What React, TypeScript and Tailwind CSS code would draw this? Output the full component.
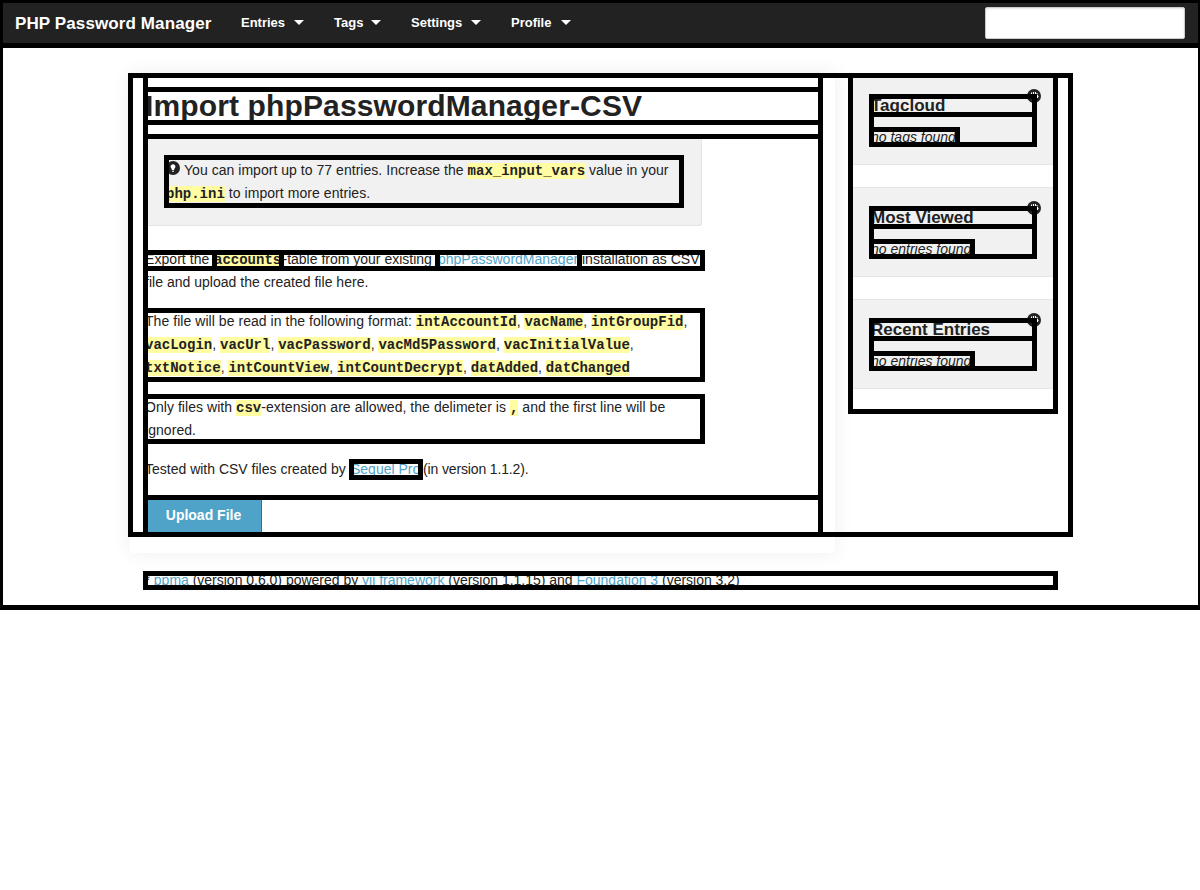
import React from "react";

const frame = "outline-[5px] outline-solid outline-black -outline-offset-5";

function Code({ children }: { children: React.ReactNode }) {
  return (
    <code className="bg-[#fffca2] font-['Liberation_Mono'] text-[14px] font-bold tracking-normal">{children}</code>
  );
}

function CodeList({ items, last = "," }: { items: string[]; last?: string }) {
  return (
    <div className="h-[23px]">
      {items.map((item, i) => (
        <React.Fragment key={item}>
          <Code>{item}</Code>
          {i < items.length - 1 ? ", " : last}
        </React.Fragment>
      ))}
    </div>
  );
}

function NavItem({ label, width }: { label: string; width: string }) {
  return (
    <li className={`flex items-center justify-between ${width}`}>
      <span className="text-[13px] font-bold leading-[20px]">{label}</span>
      <svg className="-mt-px" width="10" height="5" viewBox="0 0 10 5">
        <path d="M0 0h10L5 5z" fill="#fff" />
      </svg>
    </li>
  );
}

function Panel({ title, text, emWidth }: { title: string; text: string; emWidth: string }) {
  return (
    <section className="h-[90px] w-[210px] border border-[#e4e4e4] bg-[#f1f1f1] px-[20px] pt-[18px]">
      <div className={`relative h-[53px] w-[168px] ${frame}`}>
        <svg className="absolute top-[-5px] left-[158px]" width="14" height="14" viewBox="0 0 14 14">
          <circle cx="7" cy="7" r="7" fill="#222" />
          <path
            d="M4.5 3.5v1.5M6.5 3v2M8.5 3v2M10 4v1.5M4 7.5h7.5M10.5 6v3M7 9v2"
            stroke="#fff"
            strokeWidth="1.1"
          />
        </svg>
        <div className={`absolute inset-0 ${frame}`} />
        <h5 className={`relative h-[23px] pl-[2px] text-[17px] font-bold leading-[23px] ${frame}`}>{title}</h5>
        <div
          className={`relative mt-[10px] h-[20px] pl-[2px] leading-[21px] italic whitespace-nowrap ${emWidth} ${frame}`}
        >
          {text}
        </div>
      </div>
    </section>
  );
}

function Link({ children }: { children: React.ReactNode }) {
  return <a className="text-[#4fa3c8]">{children}</a>;
}

export default function App() {
  return (
    <div className="h-[890px] w-[1200px] overflow-hidden bg-white font-['Liberation_Sans',sans-serif] text-[14px] leading-[23px] text-[#222]">
      <div className="h-[610px] border-t-3 border-r-2 border-b-5 border-l-3 border-black">
        <nav className="flex h-[45px] items-center border-b-5 border-black bg-[#222] pr-[13px] pl-[12px] text-white">
          <h1 className="w-[226px] pt-px text-[17px] font-bold leading-[21px] tracking-[0.11px] whitespace-nowrap">
            PHP Password Manager
          </h1>
          <ul className="flex flex-1 gap-[30px]">
            <NavItem label="Entries" width="w-[63px]" />
            <NavItem label="Tags" width="w-[47px]" />
            <NavItem label="Settings" width="w-[70px]" />
            <NavItem label="Profile" width="w-[60px]" />
          </ul>
          <input className="h-[32px] w-[200px] rounded-[2px] border border-[#ccc] bg-white shadow-[inset_0_1px_2px_rgba(0,0,0,0.1)]" />
        </nav>

        <main className="pt-[25px] pl-[125px]">
          <div className={`relative z-0 flex h-[464px] w-[945px] pl-[15px] ${frame}`}>
            <div className="absolute top-0 left-[2px] -z-10 h-[480px] w-[705px] rounded-[3px] bg-white shadow-[0_0_20px_rgba(0,0,0,0.07)]" />
            <div className={`relative h-[464px] w-[680px] ${frame}`}>
              <header className={`h-[66px] pt-[14px] ${frame}`}>
                <h2
                  className={`h-[38px] pl-[2px] text-[30px] font-bold leading-[38px] tracking-[0.13px] ${frame}`}
                >
                  Import phpPasswordManager-CSV
                </h2>
              </header>
              <div className="h-[87px] w-[559px] rounded-b-[3px] border border-t-0 border-[#e4e4e4] bg-[#f1f1f1] pt-[16px] pl-[20px]">
                <div className={`h-[53px] w-[520px] pt-[4px] pl-[2px] whitespace-nowrap ${frame}`}>
                  <div className="flex h-[23px]">
                    <svg className="mt-[2px] mr-[4px]" width="14" height="14" viewBox="0 0 14 14">
                      <circle cx="7" cy="7" r="7" fill="#222" />
                      <path
                        d="M7 3.2a2.4 2.4 0 0 1 1.5 4.3L8.1 9H5.9l-.4-1.5A2.4 2.4 0 0 1 7 3.2zM6 9.8h2v1H6z"
                        fill="#fff"
                      />
                    </svg>
                    <span className="tracking-[0.035px]">
                      You can import up to 77 entries. Increase the <Code>max_input_vars</Code>
                      <span className="tracking-normal"> value in your</span>
                    </span>
                  </div>
                  <div className="tracking-[0.06px]">
                    <Code>php.ini</Code> to import more entries.
                  </div>
                </div>
              </div>

              <div className={`mt-[24px] flex h-[21px] w-[562px] whitespace-nowrap leading-[19px] ${frame}`}>
                <span className="w-[69px] shrink-0 pl-[2px] tracking-[0.06px]">Export the</span>
                <span className={`relative z-10 w-[72px] shrink-0 pl-[2px] ${frame}`}>
                  <Code>accounts</Code>
                </span>
                <span className="w-[151px] shrink-0 -indent-[1.5px]">-table from your existing</span>
                <span className={`relative z-10 w-[147px] shrink-0 pl-[3px] ${frame}`}>
                  <Link>phpPasswordManager</Link>
                </span>
                <span className="shrink-0">installation as CSV</span>
              </div>
              <div className="pl-[2px] tracking-[0.02px]">file and upload the created file here.</div>

              <div className={`mt-[14px] h-[74px] w-[562px] pt-[2px] pl-[2px] whitespace-nowrap ${frame}`}>
                <div className="h-[23px]">
                  <span className="tracking-[0.05px]">The file will be read in the following format: </span>
                  <Code>intAccountId</Code>, <Code>vacName</Code>, <Code>intGroupFid</Code>,
                </div>
                <CodeList items={["vacLogin", "vacUrl", "vacPassword", "vacMd5Password", "vacInitialValue"]} />
                <CodeList items={["txtNotice", "intCountView", "intCountDecrypt", "datAdded", "datChanged"]} last="" />
              </div>

              <div
                className={`mt-[12px] h-[50px] w-[562px] pt-[2px] pl-[2px] tracking-[0.05px] whitespace-nowrap ${frame}`}
              >
                <div className="h-[23px]">
                  Only files with <Code>csv</Code>-extension are allowed, the delimeter is <Code>,</Code> and the first
                  line will be
                </div>
                <div className="h-[23px]">ignored.</div>
              </div>

              <div className="mt-[14px] flex h-[23px] whitespace-nowrap">
                <span className="w-[206px] pl-[2px]">Tested with CSV files created by</span>
                <span className={`relative mt-px h-[21px] w-[74px] pl-[2px] leading-[21px] ${frame}`}>
                  <Link>Sequel Pro</Link>
                </span>
                <span className="tracking-[-0.14px]">(in version 1.1.2).</span>
              </div>

              <div className={`mt-[14px] h-[42px] ${frame}`}>
                <button className="block h-[42px] w-[119px] border border-[#2f7391] bg-[#4fa3c8] pb-px pl-[2px] text-[14px] font-bold text-white">
                  Upload File
                </button>
              </div>
            </div>
            <aside className={`relative ml-[25px] flex h-[341px] w-[210px] flex-col gap-[22px] pt-[2px] ${frame}`}>
              <Panel title="Tagcloud" text="no tags found" emWidth="w-[91px]" />
              <Panel title="Most Viewed" text="no entries found" emWidth="w-[106px]" />
              <Panel title="Recent Entries" text="no entries found" emWidth="w-[106px]" />
            </aside>
          </div>
          <footer
            className={`relative mt-[34px] ml-[15px] h-[19px] w-[915px] pl-[1.5px] tracking-[-0.01px] leading-[19px] ${frame}`}
          >
            * <Link>ppma</Link> (version 0.6.0) powered by <Link>yii framework</Link> (version 1.1.15) and{" "}
            <Link>Foundation 3</Link> (version 3.2)
          </footer>
        </main>
      </div>
    </div>
  );
}
